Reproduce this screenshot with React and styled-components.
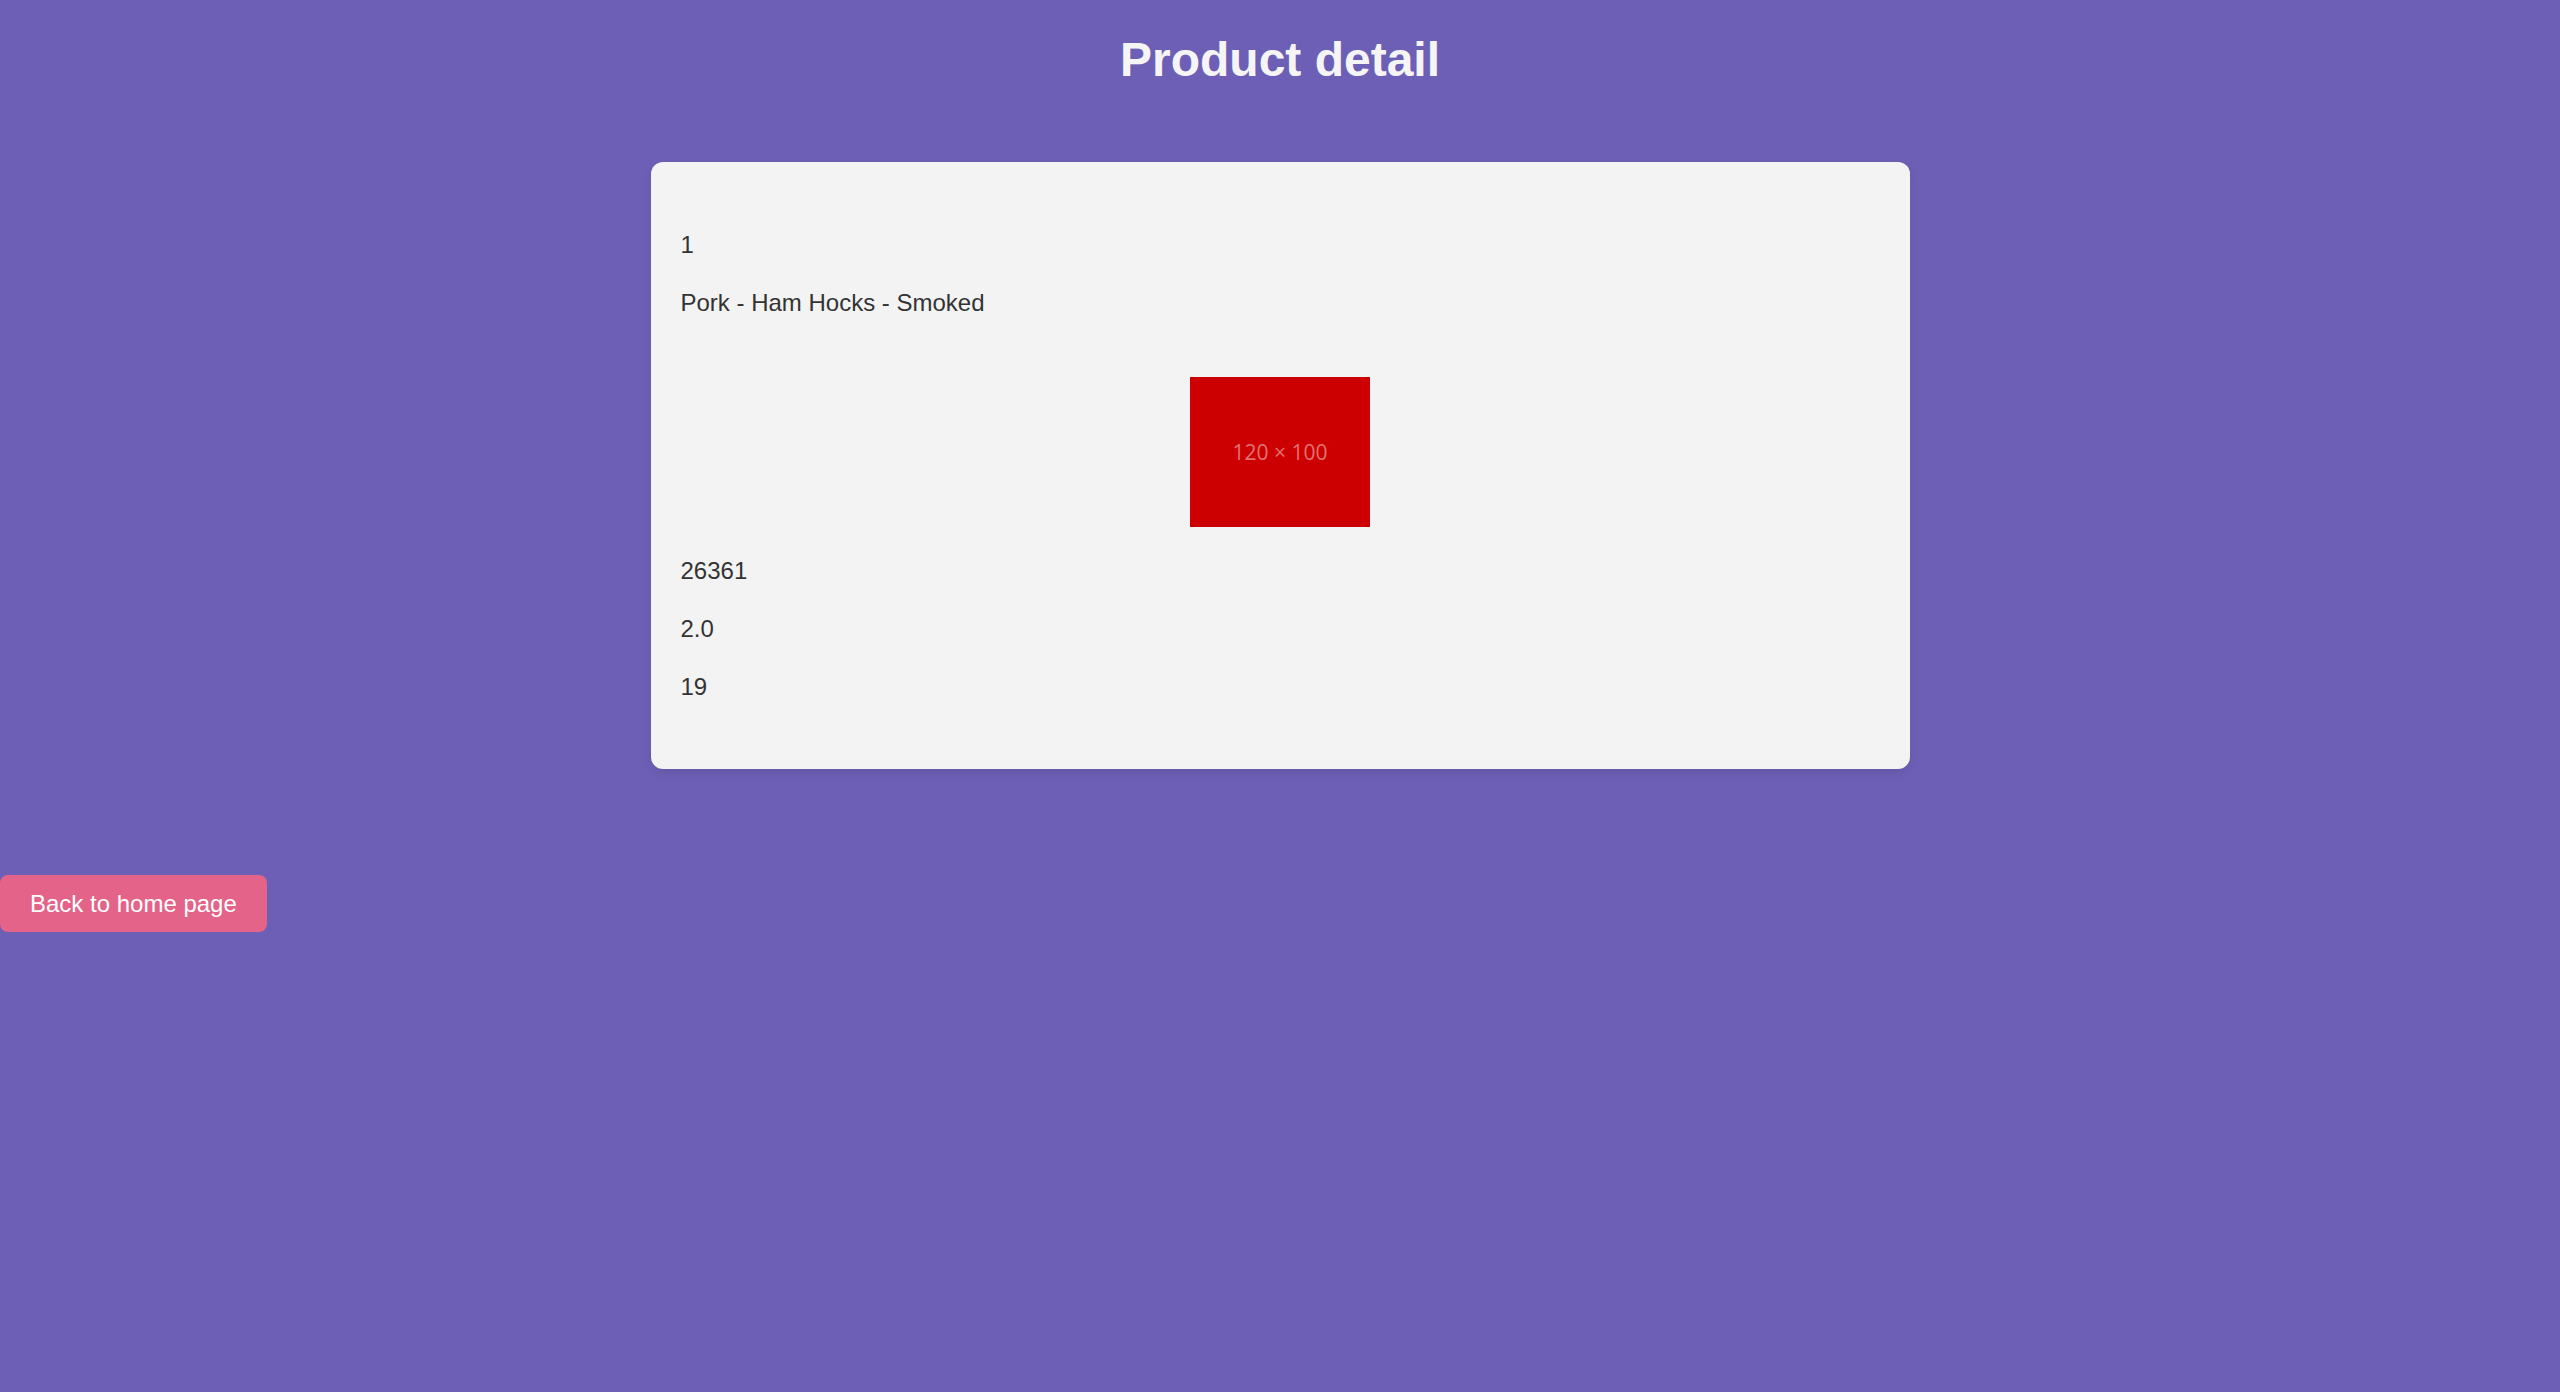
import React from 'react';
import styled, { createGlobalStyle } from 'styled-components';

const GlobalStyle = createGlobalStyle`
  html, body {
    margin: 0;
    padding: 0;
    min-height: 100%;
    background: #6d5fb5;
    font-family: "Liberation Sans", Arial, sans-serif;
  }
`;

const Page = styled.div`
  min-height: 1392px;
  padding-top: 32px;
  box-sizing: border-box;
  display: flex;
  flex-direction: column;
`;

const Title = styled.h1`
  margin: 0;
  text-align: center;
  font-size: 48px;
  line-height: 56px;
  font-weight: bold;
  color: #f5f5f5;
`;

const Card = styled.div`
  box-sizing: border-box;
  width: 1259px;
  margin: 74px auto 0;
  padding: 66px 30px 65px;
  background: #f3f3f3;
  border-radius: 12px;
  box-shadow: 0 4px 10px rgba(0, 0, 0, 0.08);
  display: flex;
  flex-direction: column;
  gap: 24px;
`;

const Field = styled.p`
  margin: 0;
  font-size: 24px;
  line-height: 34px;
  color: #333;
`;

const ImageRow = styled.div`
  display: flex;
  justify-content: center;
  margin: 33px 0 3px;
`;

const Placeholder = styled.div`
  width: 180px;
  height: 150px;
  background: #cc0000;
  display: flex;
  align-items: center;
  justify-content: center;
  font-family: "Open Sans", sans-serif;
  font-size: 21px;
  color: rgba(255, 255, 255, 0.45);
`;

const BackButton = styled.button`
  align-self: flex-start;
  margin-top: 106px;
  padding: 15px 30px;
  border: none;
  border-radius: 8px;
  background: #e36389;
  color: #fff;
  font-family: "Liberation Sans", Arial, sans-serif;
  font-size: 24px;
  line-height: 27px;
  cursor: pointer;
`;

const product = {
  id: 1,
  name: 'Pork - Ham Hocks - Smoked',
  code: 26361,
  rating: '2.0',
  stock: 19,
};

export default function App() {
  return (
    <>
      <GlobalStyle />
      <Page>
        <Title>Product detail</Title>
        <Card>
          <Field>{product.id}</Field>
          <Field>{product.name}</Field>
          <ImageRow>
            <Placeholder>120 × 100</Placeholder>
          </ImageRow>
          <Field>{product.code}</Field>
          <Field>{product.rating}</Field>
          <Field>{product.stock}</Field>
        </Card>
        <BackButton>Back to home page</BackButton>
      </Page>
    </>
  );
}
